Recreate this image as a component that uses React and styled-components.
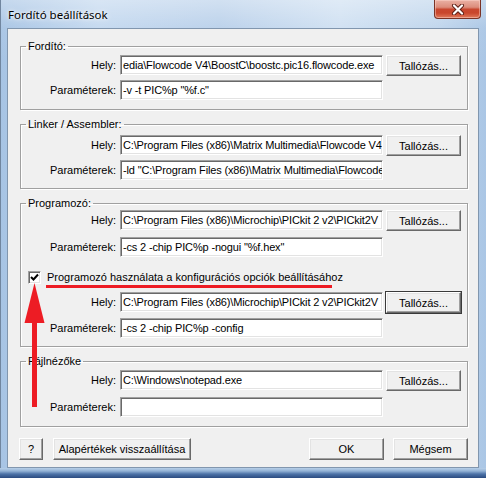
import React from 'react';
import styled, { createGlobalStyle } from 'styled-components';

const Global = createGlobalStyle`
  html, body { margin: 0; padding: 0; background: #ffffff; overflow: hidden; }
  #root { width: 486px; height: 478px; }
  * { box-sizing: border-box; }
`;

const UI_FONT = `"Liberation Sans", Arial, sans-serif`;

const Win = styled.div`
  position: relative;
  width: 486px;
  height: 478px;
  display: flex;
  flex-direction: column;
  border-left: 1px solid #71869f;
  background:
    linear-gradient(180deg, rgba(255,255,255,0.35) 0px, rgba(255,255,255,0.05) 28px, rgba(255,255,255,0) 60px),
    linear-gradient(90deg, #a7c4e4 0%, #c3d8ef 20%, #b9d0ea 45%, #cfe0f2 70%, #bfd5ec 90%, #aac6e5 100%);
`;

const TitleBar = styled.div`
  height: 28px;
  flex: none;
  display: flex;
  align-items: flex-start;
  justify-content: space-between;
  padding-left: 7px;
`;

const Title = styled.span`
  font-family: "Noto Sans", "Open Sans", sans-serif;
  font-size: 11.5px;
  line-height: 16px;
  margin-top: 7px;
  color: #000;
  text-shadow: 0 0 6px rgba(255,255,255,0.95), 0 0 3px rgba(255,255,255,0.9);
`;

const CloseBtn = styled.div`
  width: 47px;
  height: 19px;
  margin-right: 5px;
  display: flex;
  align-items: center;
  justify-content: center;
  border: 1px solid #7a3326;
  border-top: none;
  border-radius: 0 0 4px 4px;
  background: linear-gradient(180deg, #eab1a4 0%, #dc8d7c 40%, #c8472f 52%, #c9462c 72%, #e07a5c 100%);
  box-shadow: inset 0 0 0 1px rgba(255,220,210,0.45);
`;

const Client = styled.div`
  flex: none;
  width: 472px;
  height: 440px;
  margin-left: 6px;
  background: #f0f0f0;
  border: 1px solid #8196ae;
  display: flex;
  flex-direction: column;
  padding: 11px 10px 0 12px;
`;

const BottomFrame = styled.div`
  flex: 1;
  margin-left: -1px;
  background: linear-gradient(180deg, #b7cfe8 0px, #94b3d6 3px, #4d73a8 6px, #2b4b80 10px);
`;

const Group = styled.fieldset`
  margin: ${p => p.$mt || 0}px 0 0 0;
  padding: ${p => p.$pt}px 6px ${p => p.$pb}px 0;
  min-inline-size: 0;
  border: 1px solid #a0a0a0;
  box-shadow: inset 1px 1px 0 #ffffff, 1px 1px 0 #ffffff;
  display: flex;
  flex-direction: column;
`;

const Legend = styled.legend`
  font-family: ${UI_FONT};
  font-size: 11px;
  line-height: 12px;
  padding: 0 2px;
  margin-left: 5px;
  color: #000;
`;

const Row = styled.div`
  display: grid;
  grid-template-columns: 96px 263px 75px;
  column-gap: 3px;
  align-items: start;
  margin-top: ${p => p.$mt || 0}px;
`;

const Label = styled.span`
  font-family: ${UI_FONT};
  font-size: 11px;
  line-height: 20px;
  text-align: right;
  padding-right: 1px;
  color: #000;
  white-space: nowrap;
`;

const Field = styled.div`
  height: 20px;
  min-width: 0;
  background: #fff;
  border: 1px solid;
  border-color: #a0a0a0 #ffffff #ffffff #a0a0a0;
  box-shadow: inset 1px 1px 0 #696969, inset -1px -1px 0 #e3e3e3;
  padding: 0 0 0 2px;
  overflow: hidden;
  font-family: ${UI_FONT};
  font-size: 11px;
  letter-spacing: -0.15px;
  line-height: 18px;
  color: #000;
  white-space: nowrap;
`;

const Button = styled.div`
  height: ${p => p.$h || 21}px;
  width: ${p => (p.$w ? `${p.$w}px` : 'auto')};
  display: flex;
  align-items: center;
  justify-content: center;
  background: #f0f0f0;
  border: 1px solid;
  border-color: #ffffff #696969 #696969 #ffffff;
  box-shadow: inset -1px -1px 0 #a0a0a0, inset 1px 1px 0 #e3e3e3;
  font-family: ${UI_FONT};
  font-size: 11px;
  color: #000;
  white-space: nowrap;
  outline: ${p => (p.$focus ? '1px solid #3a3a3a' : 'none')};
  outline-offset: 0;
`;

const CheckRow = styled.div`
  display: flex;
  align-items: center;
  gap: 6px;
  height: 19px;
  padding-left: 7px;
  margin-top: ${p => p.$mt || 0}px;
`;

const CheckBox = styled.div`
  width: 13px;
  height: 13px;
  flex: none;
  background: #fff;
  border: 1px solid;
  border-color: #a0a0a0 #ffffff #ffffff #a0a0a0;
  box-shadow: inset 1px 1px 0 #696969, inset -1px -1px 0 #e3e3e3;
  display: flex;
  align-items: center;
  justify-content: center;
`;

const CheckText = styled.span`
  font-family: ${UI_FONT};
  font-size: 11px;
  line-height: 13px;
  color: #000;
  white-space: nowrap;
`;

const Footer = styled.div`
  display: flex;
  align-items: center;
  margin-top: 11px;
  padding-left: 0;
`;

const FooterLeft = styled.div`
  display: flex;
  gap: 10px;
  margin-left: -1px;
`;

const FooterRight = styled.div`
  display: flex;
  gap: 9px;
  margin-left: auto;
`;

const Annotation = styled.svg`
  position: absolute;
  left: 0;
  top: 0;
  pointer-events: none;
`;

const PathRow = ({ label, value, browse, mt, focus }) => (
  <Row $mt={mt}>
    <Label>{label}</Label>
    <Field>{value}</Field>
    {browse && <Button $focus={focus}>Tallózás...</Button>}
  </Row>
);

export default function App() {
  return (
    <>
      <Global />
      <Win>
        <TitleBar>
          <Title>Fordító beállítások</Title>
          <CloseBtn>
            <svg width="14" height="11" viewBox="0 0 14 11">
              <path d="M3 1.5 L11 9.5 M11 1.5 L3 9.5" stroke="#5a1d14" strokeWidth="4" strokeLinecap="round" />
              <path d="M3 1.5 L11 9.5 M11 1.5 L3 9.5" stroke="#ffffff" strokeWidth="2.2" strokeLinecap="round" />
            </svg>
          </CloseBtn>
        </TitleBar>
        <Client>
          <Group $pt={3} $pb={9}>
            <Legend>Fordító:</Legend>
            <PathRow label="Hely:" value="edia\Flowcode V4\BoostC\boostc.pic16.flowcode.exe" browse />
            <PathRow label="Paraméterek:" value={'-v -t PIC%p "%f.c"'} mt={4} />
          </Group>
          <Group $mt={8} $pt={5} $pb={8}>
            <Legend>Linker / Assembler:</Legend>
            <PathRow label="Hely:" value="C:\Program Files (x86)\Matrix Multimedia\Flowcode V4" browse />
            <PathRow label="Paraméterek:" value={'-ld "C:\\Program Files (x86)\\Matrix Multimedia\\Flowcode'} mt={4} />
          </Group>
          <Group $mt={8} $pt={1} $pb={8}>
            <Legend>Programozó:</Legend>
            <PathRow label="Hely:" value="C:\Program Files (x86)\Microchip\PICkit 2 v2\PICkit2V" browse />
            <PathRow label="Paraméterek:" value={'-cs 2 -chip PIC%p -nogui "%f.hex"'} mt={6} />
            <CheckRow $mt={11}>
              <CheckBox>
                <svg width="9" height="9" viewBox="0 0 9 9">
                  <path d="M1 4 L3.5 6.5 L8 1.5" stroke="#000" strokeWidth="2" fill="none" />
                </svg>
              </CheckBox>
              <CheckText>Programozó használata a konfigurációs opciók beállításához</CheckText>
            </CheckRow>
            <PathRow label="Hely:" value="C:\Program Files (x86)\Microchip\PICkit 2 v2\PICkit2V" browse focus mt={5} />
            <PathRow label="Paraméterek:" value="-cs 2 -chip PIC%p -config" mt={5} />
          </Group>
          <Group $mt={8} $pt={3} $pb={9}>
            <Legend>Fájlnézőke</Legend>
            <PathRow label="Hely:" value="C:\Windows\notepad.exe" browse />
            <PathRow label="Paraméterek:" value="" mt={6} />
          </Group>
          <Footer>
            <FooterLeft>
              <Button $w={24} $h={22}>?</Button>
              <Button $w={138} $h={22}>Alapértékek visszaállítása</Button>
            </FooterLeft>
            <FooterRight>
              <Button $w={75} $h={22}>OK</Button>
              <Button $w={75} $h={22}>Mégsem</Button>
            </FooterRight>
          </Footer>
        </Client>
        <BottomFrame />
        <Annotation width="486" height="478" viewBox="0 0 486 478">
          <rect x="45" y="285" width="286" height="3" fill="#ed1c24" />
          <rect x="31" y="318" width="5" height="89" fill="#ed1c24" />
          <polygon points="33.5,283 23.5,323 43.5,323" fill="#ed1c24" />
        </Annotation>
      </Win>
    </>
  );
}
